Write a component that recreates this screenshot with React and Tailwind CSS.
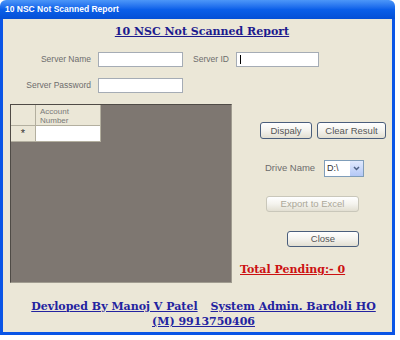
import React from "react";

function XpButton({ children, disabled, className }) {
  return (
    <button
      className={`flex items-center justify-center rounded-[3px] border text-[9.5px] leading-none bg-gradient-to-b from-white via-[#f4f3ee] to-[#e2dfd2] ${
        disabled ? "border-[#c9c7ba] text-[#aca899]" : "border-[#4a5e7c] text-[#555555]"
      } ${className}`}
    >
      {children}
    </button>
  );
}

export default function App() {
  return (
    <div className="w-[400px] h-[340px] bg-white">
      <div className="w-[395px] h-[335px] flex flex-col">
        {/* title bar */}
        <div className="h-[19px] shrink-0 rounded-t-[6px] bg-gradient-to-b from-[#4c96f8] via-[#0b5fe9] to-[#0550d6] flex items-center px-[5px]">
          <span className="font-['Liberation_Sans',Arial,sans-serif] text-[8.5px] font-bold text-white leading-none">
            10 NSC Not Scanned Report
          </span>
        </div>

        <div className="flex-1 border-x-[3px] border-b-[3px] border-[#0a55e6] bg-[#ebe7d7] flex flex-col font-['Liberation_Sans',Arial,sans-serif]">
          <h1 className="mt-[5px] pl-[9px] text-center font-['DejaVu_Serif',serif] font-bold text-[11px] leading-[16px] text-[#1d1a8e] underline">
            10 NSC Not Scanned Report
          </h1>

          {/* server name / id */}
          <div className="mt-[12px] flex items-center h-[15px]">
            <span className="w-[88px] text-right text-[8.5px] text-[#6d6d6d]">Server Name</span>
            <div className="ml-[7px] w-[85px] h-[15px] border border-[#a5acb5] bg-white" />
            <span className="ml-[10px] text-[8.5px] text-[#6d6d6d]">Server ID</span>
            <div className="ml-[7px] w-[83px] h-[15px] border border-[#a5acb5] bg-white flex items-center pl-[3px]">
              <div className="w-px h-[9px] bg-black" />
            </div>
          </div>

          {/* password */}
          <div className="mt-[11px] flex items-center h-[15px]">
            <span className="w-[88px] text-right text-[8.5px] text-[#6d6d6d]">Server Password</span>
            <div className="ml-[7px] w-[85px] h-[15px] border border-[#a5acb5] bg-white" />
          </div>

          {/* grid + actions */}
          <div className="mt-[11px] flex">
            <div className="ml-[7px] w-[222px] h-[179px] bg-[#7e7771] border border-[#4f4b46] border-r-[#a09c90] border-b-[#a09c90]">
              <div className="flex flex-col w-[90px]">
                <div className="flex h-[21px]">
                  <div className="w-[25px] bg-[#ebe7d7] border-r border-b border-[#b3af9f]" />
                  <div className="w-[65px] bg-[#ebe7d7] border-r border-b border-[#b3af9f] pl-[4px] pt-[2px] text-[8px] leading-[9px] text-[#7a7a7a]">
                    Account
                    <br />
                    Number
                  </div>
                </div>
                <div className="flex h-[16px]">
                  <div className="w-[25px] bg-[#ebe7d7] border-r border-b border-[#b3af9f] flex items-center justify-center text-[11px] leading-none text-[#333]">
                    *
                  </div>
                  <div className="w-[65px] bg-white border-r border-b border-[#b3af9f]" />
                </div>
              </div>
            </div>

            <div className="ml-[8px] flex flex-col">
              <div className="mt-[18px] ml-[20px] flex gap-[5px] h-[17px]">
                <XpButton className="w-[52px] h-[17px]">Dispaly</XpButton>
                <XpButton className="w-[69px] h-[17px]">Clear Result</XpButton>
              </div>

              <div className="mt-[21px] ml-[25px] flex items-center h-[17px]">
                <span className="w-[51px] text-[9.5px] text-[#6d6d6d]">Drive Name</span>
                <div className="ml-[8px] w-[40px] h-[17px] border border-[#7f9db9] bg-white flex items-center">
                  <span className="flex-1 pl-[2px] text-[9px] text-[#333]">D:\</span>
                  <div className="w-[13px] h-[15px] bg-gradient-to-b from-[#e0e9fd] to-[#b4c8f6] flex items-center justify-center">
                    <svg width="7" height="5" viewBox="0 0 7 5">
                      <path d="M1 1 L3.5 3.5 L6 1" stroke="#4d6185" strokeWidth="1.5" fill="none" />
                    </svg>
                  </div>
                </div>
              </div>

              <XpButton disabled className="mt-[19px] ml-[26px] w-[93px] h-[16px]">
                Export to Excel
              </XpButton>

              <XpButton className="mt-[19px] ml-[47px] w-[72px] h-[16px] text-[#8a8a8a]">Close</XpButton>

              <span className="mt-[16px] font-['DejaVu_Serif',serif] font-bold text-[11px] leading-[14px] text-[#cc1111] underline">
                Total Pending:- 0
              </span>
            </div>
          </div>

          {/* footer */}
          <div className="mt-[16px] pl-[12px] flex flex-col items-center font-['DejaVu_Serif',serif] font-bold text-[11px] leading-[15px] text-[#2323a0]">
            <div className="flex gap-[13px]">
              <span className="underline">Devloped By Manoj V Patel</span>
              <span className="underline">System Admin. Bardoli HO</span>
            </div>
            <span className="underline">(M) 9913750406</span>
          </div>
        </div>
      </div>
    </div>
  );
}
